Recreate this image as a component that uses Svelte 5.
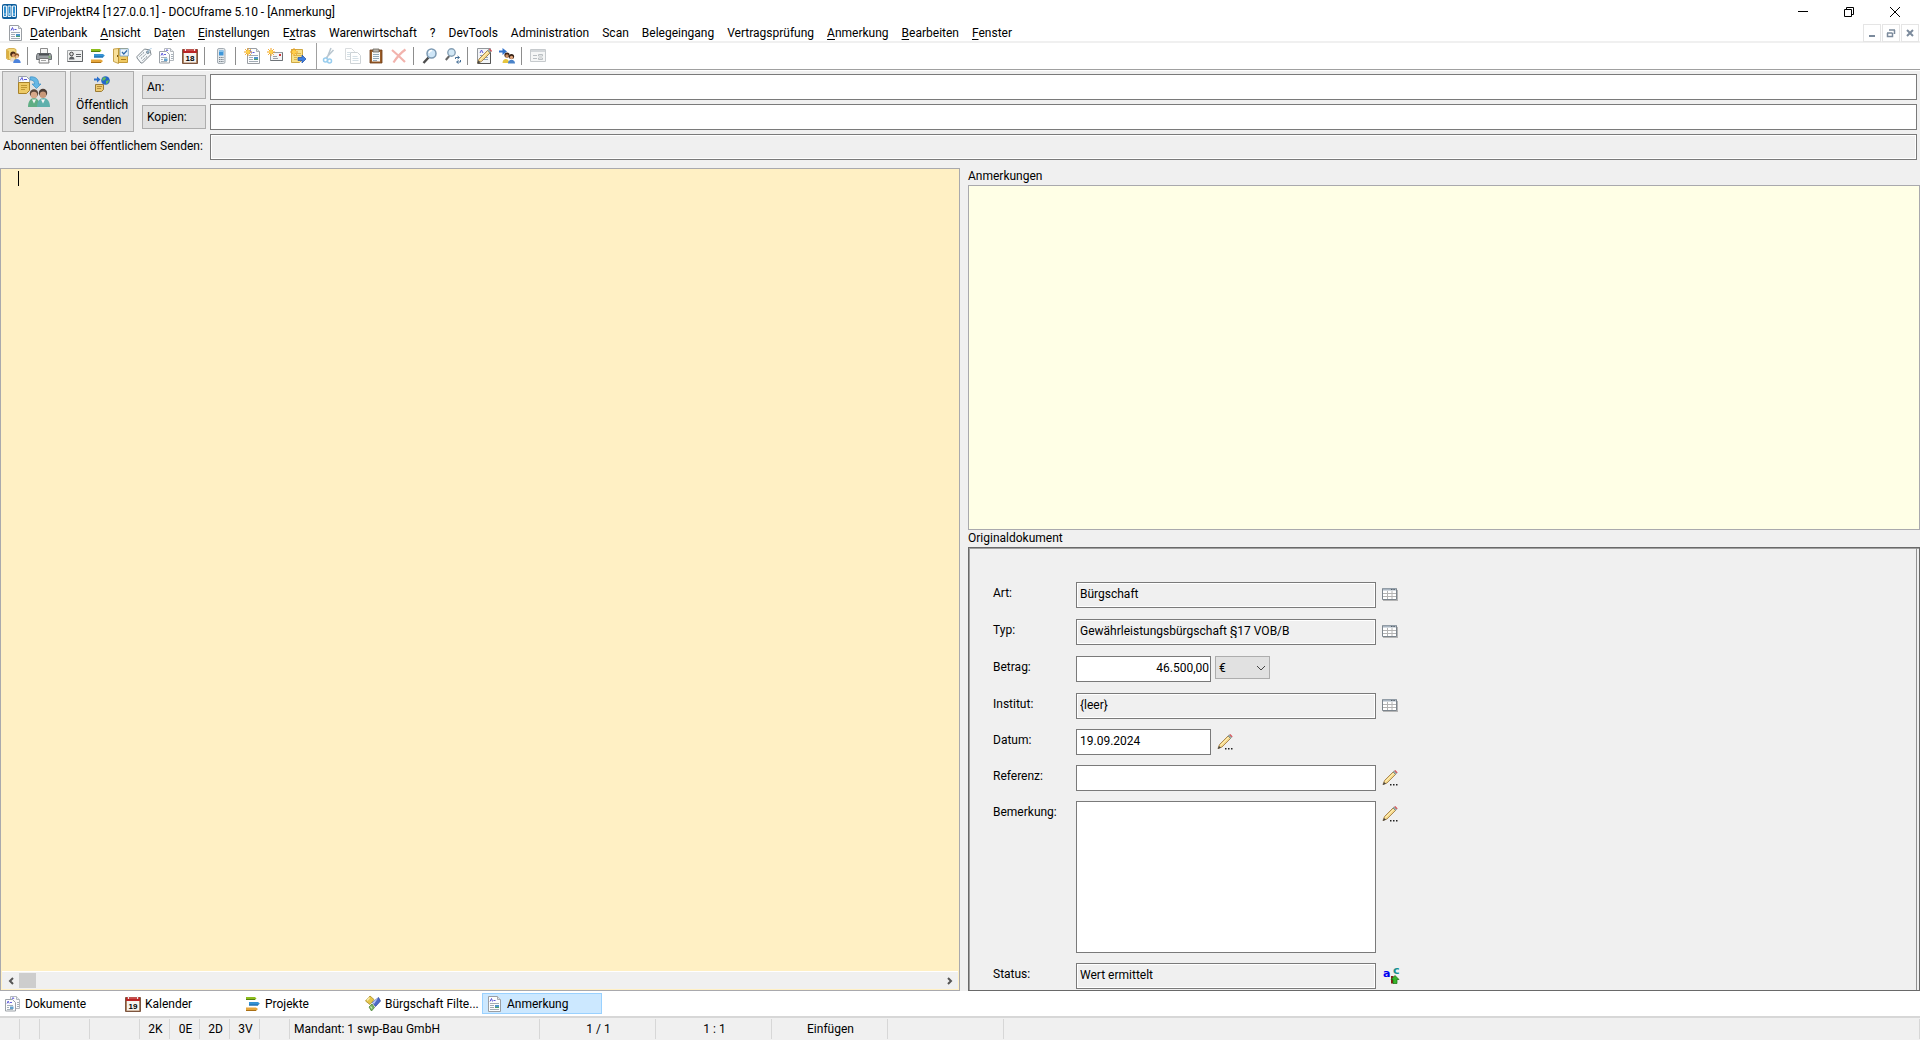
<script>
  const menu = [
    ['', 'D', 'atenbank'], ['', 'A', 'nsicht'], ['Da', 't', 'en'], ['', 'E', 'instellungen'],
    ['E', 'x', 'tras'], ['Warenwirtschaft', '', ''], ['?', '', ''], ['DevTools', '', ''],
    ['Administration', '', ''], ['Scan', '', ''], ['Belegeingang', '', ''],
    ['Vertragsprüfung', '', ''], ['', 'A', 'nmerkung'], ['', 'B', 'earbeiten'], ['', 'F', 'enster']
  ];
  const tools = [
    ['userdb', 'Anmelden'], '|', ['printer', 'Drucken'], '|', ['card', 'Adressen'], ['bars', 'Projekte'],
    ['cabinet', 'Vorgänge'], ['tag', 'Artikel'], ['docs', 'Dokumente'], ['cal18', 'Kalender'], '|',
    ['phone', 'Telefon'], '|', ['newdoc', 'Neues Dokument'], ['newmail', 'Neue Nachricht'],
    ['notearrow', 'Neue Notiz'], '||', ['cut', 'Ausschneiden'], ['copy', 'Kopieren'],
    ['paste', 'Einfügen'], ['del', 'Löschen'], '|', ['find', 'Suchen'], ['findnext', 'Weitersuchen'], '|',
    ['edit', 'Bearbeiten'], ['people', 'Senden an'], '|', ['form', 'Formular']
  ];
  const tabs = [
    ['docs', 'Dokumente'], ['cal19', 'Kalender'], ['bars', 'Projekte'],
    ['filter', 'Bürgschaft Filte...'], ['doc', 'Anmerkung']
  ];
  const status = [
    ['', 'w20'], ['', 'w20'], ['', 'w50'], ['', 'w50'], ['2K', 'w30'], ['0E', 'w30'], ['2D', 'w30'],
    ['3V', 'w30'], ['', 'w30'], ['Mandant: 1 swp-Bau GmbH', 'w250'],
    ['1 / 1', 'w116'], ['1 : 1', 'w116'], ['Einfügen', 'w116'], ['', 'w116'], ['', 'rest']
  ];
</script>

{#snippet sheet()}
  <path d="M1.500 .5h9l3 3v12h-12z" fill="#fcfdfe" stroke="#9a9ea3" />
  <path d="M10.500 .5v3h3" fill="#dfe3e6" stroke="#a8acb0" />
  <path d="M3 5.500l1.500-3 1 3M6.500 4.500h2" fill="none" stroke="#5a55d6" />
  <path d="M3 7.500h9M3 9.500h4M3 11.500h4M3 13.500h9" stroke="#a2abb5" />
  <path d="M8 9h4v3H8z" fill="#4d93c8" /><path d="M8 11h4v1H8z" fill="#4da06a" />
{/snippet}

{#snippet star()}
  <path d="M4 0v8M0 4h8M1.200 1.200l5.600 5.600M6.800 1.200L1.200 6.800" stroke="#f0a020" stroke-width="1" />
  <circle cx="4" cy="4" r="2" fill="#ffd04a" />
{/snippet}

{#snippet pencil()}
  <path d="M1 14.500l1.500-4L11 2l2.500 2.500L5 13z" fill="#f5d98c" stroke="#98713a" stroke-width=".8" />
  <path d="M3.500 11.500L12 3" stroke="#fff0b8" />
  <path d="M11 2l1.200-1.200 2.500 2.500L13.500 4.500z" fill="#9eb0ac" stroke="#71807c" stroke-width=".5" />
  <path d="M12.300 .8l1-.8 2.400 2.400-1 .9z" fill="#d85058" />
  <path d="M.7 15l1.300-3 2 1.800z" fill="#444" />
{/snippet}

{#snippet icon(name)}
  <svg class="ic" viewBox="0 0 16 16" aria-hidden="true">
    {#if name === 'userdb'}
      <path d="M1.500 1.500L4 .5h5l2 1v10H3l-1.500-1z" fill="#f3d77a" stroke="#cda23c" stroke-width=".8" />
      <path d="M2 2v8l2 1.500V3z" fill="#dcb040" />
      <circle cx="8" cy="6.200" r="2.700" fill="#4a2a16" /><circle cx="8.600" cy="7.400" r="1.800" fill="#d99a68" />
      <path d="M5 13.500c-.5-3.500 3-4.500 5-3.500l-1 3.500z" fill="#e9dccb" />
      <circle cx="11.800" cy="7.600" r="2.300" fill="#8a5326" /><circle cx="12" cy="8.600" r="1.600" fill="#efbd90" />
      <path d="M8.200 15c0-5.500 7.500-5.500 7.500 0z" fill="#4d83dc" />
    {:else if name === 'printer'}
      <path d="M4.500 .5h7v6h-7z" fill="#f6f6f6" stroke="#8b8b8b" />
      <path d="M1.500 5.500h13l1 2v4h-15v-4z" fill="#9b9fa3" stroke="#6a6e72" />
      <path d="M3 6.500h10" stroke="#4b4f53" stroke-width="2" /><path d="M3.500 10.500h9l.5 4.500H3z" fill="#fafafa" stroke="#777" />
      <path d="M5 12.500h5" stroke="#a5a5a5" /><path d="M12.500 9h2" stroke="#66c04a" />
    {:else if name === 'card'}
      <path d="M.5 2.500h15v11H.5z" fill="#eff0f0" stroke="#a3a6a8" /><path d="M.5 13.500h15v-11" fill="none" stroke="#606366" />
      <circle cx="4.500" cy="6" r="1.800" fill="#ddd" stroke="#444" /><path d="M2 11.500c0-4 5.500-4 5.500 0z" fill="#5a5d60" />
      <path d="M9 6.500h5M9 8.500h5" stroke="#5f6265" />
    {:else if name === 'bars'}
      <path d="M1 1h9l1.500 1.500L10 4H1z" fill="#8dbd1d" /><path d="M1 3.500h9" stroke="#56800e" />
      <path d="M4 6h9l1.800 1.500L13 9.500H4z" fill="#3592d4" /><path d="M4 9h9" stroke="#1765a5" />
      <path d="M1 11.500h10l2 1.500-2 2H1z" fill="#e5a63b" /><path d="M1 14.500h10" stroke="#a96f14" />
    {:else if name === 'cabinet'}
      <path d="M5.500 .5h9v14h-9z" fill="#f0c962" stroke="#c49a38" />
      <path d="M.5 1l5-.5v15L.5 13.500z" fill="#f8e09a" stroke="#b78d2b" stroke-width=".8" />
      <path d="M7 .8h8.300V8H7z" fill="#eef6fc" stroke="#6b9cc8" stroke-width=".8" />
      <path d="M9 4l1.800 2L14 2.500" fill="none" stroke="#2e68a8" stroke-width="1.200" />
      <path d="M8 11.500h5" stroke="#a4781d" /><path d="M4.500 7v2" stroke="#7d5b15" />
    {:else if name === 'tag'}
      <path d="M1 8.500L8.500 1l5.500 1 1 4.500L6.500 15H5L1 10z" fill="#f5f8fa" stroke="#7e878e" />
      <circle cx="11.800" cy="4.300" r="1.300" fill="#9cbcd2" stroke="#66737c" stroke-width=".8" />
      <path d="M3.500 8.500l5-4.500M5 10.500L10 6M6.500 12.500l5-4.500" stroke="#76838b" stroke-dasharray="1.500 .8" />
      <path d="M12 4c1-3 2-3 3.500-3.500" fill="none" stroke="#9cc0dc" />
    {:else if name === 'docs'}
      <path d="M5.500 .5h6l3 3v9h-9z" fill="#fcfdfe" stroke="#b3b8bd" />
      <path d="M11.500 .5v3h3" fill="#e8ebee" stroke="#b3b8bd" />
      <path d="M.5 3.500h7l3 3v8.500H.5z" fill="#fcfdfe" stroke="#9da2a8" />
      <path d="M2 7.500l1.200-2.500 1 2.500M5 6.500h2M7 3l1-1.500 1 1.500" fill="none" stroke="#6864dc" />
      <path d="M2 9.500h6M2 11.500h2M2 13.500h6M12 6.500h2M12 8.500h2M12 10.500h2" stroke="#a6b0b9" />
      <path d="M5 10.500h3.500v2.500H5z" fill="#62a2ce" />
    {:else if name === 'cal18' || name === 'cal19'}
      <path d="M.5 1.500h15v14H.5z" fill="#b08560" stroke="#7d5540" /><path d="M2 5h12v9.500H2z" fill="#f6f3f0" />
      <path d="M1 1.500h14V5H1z" fill="#b92525" /><path d="M2 2h12" stroke="#e07070" />
      <path d="M3.500 0v3M12.500 0v3" stroke="#eee" />
      <text x="8" y="12.500" text-anchor="middle" class="caltext">{name.slice(3)}</text>
    {:else if name === 'phone'}
      <rect x="4.500" y=".5" width="7.500" height="15" rx="1.500" fill="#e3e8ec" stroke="#a3abb2" />
      <path d="M6 2.500h4.500v5H6z" fill="#3f96d8" /><path d="M6 2.500h4.500v1.500H6z" fill="#88c4ee" />
      <path d="M6 9.500h4.500M6 11.500h4.500M6 13.500h4.500" stroke="#7b858d" stroke-dasharray="1.200 .5" />
    {:else if name === 'newdoc'}
      <g transform="translate(2 0)">{@render sheet()}</g>{@render star()}
    {:else if name === 'newmail'}
      <path d="M3.500 4.500h12v8h-12z" fill="#f4f5f6" stroke="#969ba0" /><path d="M3.500 12.500h12v-8" fill="none" stroke="#6f7479" />
      <path d="M12 6h2v2h-2z" fill="#d03535" /><path d="M6 8.500h4M6 10.500h5" stroke="#9aa0a5" />{@render star()}
    {:else if name === 'notearrow'}
      <path d="M1.500 1.500h11v10l-3 3h-8z" fill="#f8e08a" stroke="#cfa944" />
      <path d="M4 5.500h7M4 7.500h7M4 9.500h3M4 11.500h3" stroke="#dcb64c" />
      <path d="M8 9.500h4V7l4 4-4 4v-2.500H8z" fill="#3c7ee0" stroke="#1e4fa5" stroke-width=".7" />{@render star()}
    {:else if name === 'cut'}
      <path d="M9 0L5 10M11.500 2L4 10" stroke="#b9c6cf" stroke-width="1.500" />
      <circle cx="3.500" cy="12" r="2" fill="none" stroke="#98cdee" stroke-width="1.500" />
      <circle cx="7.500" cy="13" r="2" fill="none" stroke="#98cdee" stroke-width="1.500" />
    {:else if name === 'copy'}
      <path d="M.5 .5h6l3 3v8h-9z" fill="#fff" stroke="#d9dcde" /><path d="M5.500 4.500h7l3 3v8h-10z" fill="#fff" stroke="#ced3d6" />
      <path d="M2 4.500h4M2 6.500h3M2 8.500h3M7.500 8.500h5M7.500 10.500h6M7.500 12.500h6" stroke="#d5e0e6" />
    {:else if name === 'paste'}
      <path d="M2 2h12v13H2z" fill="#9b5d28" stroke="#6c3b14" stroke-width=".8" /><path d="M4 4h8v9.500H4z" fill="#f7fafc" />
      <path d="M5 6.500h6M5 8.500h6M5 10.500h6M5 12.500h4" stroke="#92a8b8" />
      <path d="M5 1h6v3H5z" fill="#b8b4ae" stroke="#69645c" stroke-width=".8" />
    {:else if name === 'del'}
      <path d="M1 2q6 5 13 12M14.500 1.500Q8 6 2.500 14.500" fill="none" stroke="#f2b3ad" stroke-width="2.200" />
    {:else if name === 'find'}
      <path d="M1.500 15l5-5.500" stroke="#4c4c4c" stroke-width="2.400" />
      <circle cx="9.500" cy="5.500" r="4.500" fill="#cfe6f7" stroke="#7c99b2" stroke-width="1.500" /><path d="M7 5q.5-2.500 3-2.500" fill="none" stroke="#fff" stroke-width="1.400" />
    {:else if name === 'findnext'}
      <path d="M.8 12l3.500-4" stroke="#666" stroke-width="2" />
      <circle cx="6.500" cy="4.500" r="3.700" fill="#d3e8f6" stroke="#86a0b5" stroke-width="1.400" />
      <path d="M10.500 11V9.500h3.500M12.500 8l2 1.500-2 1.500M15.500 12v2H12M13.500 12.500L11.500 14l2 1.500" fill="none" stroke="#426c94" />
    {:else if name === 'edit'}
      <path d="M1.500 .5h13v15h-13z" fill="#f3f5f7" stroke="#94999d" />
      <path d="M4 5l1.500-3L7 5" fill="none" stroke="#5a55d6" /><path d="M4 7.500h8M4 9.500h8M4 11.500h8" stroke="#8fa5bd" />
      <path d="M14.500 2v13.500H2" fill="none" stroke="#555" />
      <g transform="translate(.5 .5)">{@render pencil()}</g>
    {:else if name === 'people'}
      <path d="M0 2.500h3.500V0L8 3.500 3.500 7V4.500H0z" fill="#3474cc" />
      <circle cx="8" cy="7" r="2.600" fill="#3b2215" /><circle cx="8" cy="8" r="1.700" fill="#ce8f60" />
      <circle cx="12.500" cy="8.500" r="2.600" fill="#352015" /><circle cx="12.500" cy="9.500" r="1.700" fill="#dfa47a" />
      <path d="M3.500 15c0-5 6-5 6.500-1l-1 1z" fill="#e6c53e" /><path d="M9 15.500c0-5 7-5 7 0z" fill="#4a83c9" />
    {:else if name === 'form'}
      <path d="M.5 1.500h15v12H.5z" fill="#f5f6f6" stroke="#c6cacd" /><path d="M1 3h14" stroke="#d3d7da" stroke-width="2" />
      <path d="M3 7.500h4M3 10.500h4" stroke="#b9bec2" /><path d="M8.500 6.500h4v1.500h-4zM8.500 10h4v1.500h-4z" fill="#fff" stroke="#bbc0c3" />
    {:else if name === 'filter'}
      <path d="M5 0l4 3.500-4 5L.5 5z" fill="#e6c64a" stroke="#a88a25" stroke-width=".8" /><path d="M4.500 1.500L2 4.500" stroke="#f8ecae" stroke-width="1.500" />
      <path d="M13.500 1.500l2 3.500-5 5.500-3-4z" fill="#4c69c8" stroke="#31479a" stroke-width=".8" /><path d="M13.500 1.500l-6 5 1.500 1.500z" fill="#b9c8f2" />
      <path d="M4 11l3-3 2.500 3.500L6.500 15z" fill="#79b25f" stroke="#4c8638" stroke-width=".8" /><path d="M5.500 10.500l1.500 2" stroke="#d6edc9" stroke-width="1.200" />
    {:else if name === 'doc'}
      {@render sheet()}
    {:else if name === 'table'}
      <path d="M1 3h15v11H1z" fill="#b5b5b5" /><path d="M.5 1.500h14v11H.5z" fill="#fff" stroke="#7c858d" />
      <path d="M1 2.500h13" stroke="#a9b5c1" stroke-width="2" /><path d="M9 2.500h4" stroke="#55606a" stroke-dasharray="1 .6" />
      <path d="M1 6.500h13M1 9.500h13M5.500 4v8M10 4v8" stroke="#b4b4b4" />
    {:else if name === 'pencil'}
      {@render pencil()}<path d="M8 14h1.500v1.500H8zM11 14h1.500v1.500H11zM14 14h1.500v1.500H14z" fill="#222" />
    {:else if name === 'abc'}
      <text x="1" y="9" class="abc blue">a</text><text x="11" y="6" class="abc teal">c</text>
      <path d="M9 8h2.500v7.500H9z" fill="#8b1a1a" /><path d="M13 7.500l4 4h-2v4h-4v-4H9z" fill="#36b52a" stroke="#187010" stroke-width=".7" />
    {/if}
  </svg>
{/snippet}

<div class="app">
  <header class="title">
    <svg class="logo" viewBox="0 0 16 16" aria-hidden="true">
      <rect x="0" y="0" width="15" height="15" rx="2" fill="#0f5e9c" />
      <path d="M1.500 2h3v10.500h-3zM6 2h3v10.500H6zM10.500 2h3v10.500h-3z" fill="#2f8fd0" stroke="#fff" stroke-width=".9" />
      <path d="M2.500 10h1M7 10h1M11.500 10h1" stroke="#fff" />
    </svg>
    <h1>DFViProjektR4 [127.0.0.1] - DOCUframe 5.10 - [Anmerkung]</h1>
    <div class="winbtns">
      <button aria-label="Minimieren"><svg viewBox="0 0 12 12"><path d="M1 5.500h10" /></svg></button>
      <button aria-label="Verkleinern"><svg viewBox="0 0 12 12"><path d="M1.500 3.500h7v7h-7zM3.500 3.500v-2h7v7h-2" /></svg></button>
      <button aria-label="Schließen"><svg viewBox="0 0 12 12"><path d="M1 1l10 10M11 1L1 11" /></svg></button>
    </div>
  </header>

  <nav class="menu">
    {@render icon('doc')}
    <div class="items">
      {#each menu as [a, u, b]}<button>{a}{#if u}<u>{u}</u>{/if}{b}</button>{/each}
    </div>
    <div class="mdi">
      <button aria-label="Fenster minimieren"><svg viewBox="0 0 10 10"><path d="M2 8h6" /></svg></button>
      <button aria-label="Fenster verkleinern"><svg viewBox="0 0 10 10"><path d="M3 2h6M8.500 2v4M1 5h5.500M1.500 5v3.500h5V5" class="thin" /></svg></button>
      <button aria-label="Fenster schließen"><svg viewBox="0 0 10 10"><path d="M2 2l6 6M8 2L2 8" /></svg></button>
    </div>
  </nav>

  <div class="toolbar" role="toolbar">
    {#each tools as t}
      {#if t === '|'}<span class="sep"></span>
      {:else if t === '||'}<span class="sep full"></span>
      {:else}<button aria-label={t[1]}>{@render icon(t[0])}</button>{/if}
    {/each}
  </div>

  <section class="compose">
    <div class="send">
      <button class="big">
        <svg class="bigic" viewBox="0 0 32 32" aria-hidden="true">
          <path d="M.5 .5h8l3 3v8H.5z" fill="#fafbfd" stroke="#9ba2aa" /><path d="M2 4.500l2-3 1 3M6 3.500h3" fill="none" stroke="#5955d8" />
          <path d="M.5 6.500h11v8l-3 3h-8z" fill="#edca66" stroke="#a8822a" /><path d="M3 9.500h6M3 11.500h6M3 13.500h4" stroke="#c09632" />
          <path d="M12 1c5-1 9 2 8.500 7H23l-4.500 4.500L14 8h2.500c0-3-1.500-4-4.500-4z" fill="#66b7e4" stroke="#3a8dc4" stroke-width=".7" />
          <path d="M10 31c0-12 12-12 12 0z" fill="#5fae84" /><path d="M19 31c0-12 13-12 13 0z" fill="#5fb0ac" />
          <circle cx="16" cy="17.500" r="4.200" fill="#5b473a" /><circle cx="16" cy="19" r="3.200" fill="#d8a98a" />
          <circle cx="25" cy="17" r="4.200" fill="#4d3d34" /><circle cx="25" cy="18.800" r="3.200" fill="#c89878" />
          <path d="M14 23.500l2 4 2-4zM23 23.500l2 4 2-4z" fill="#f5f5f5" />
        </svg>
        <span>Senden</span>
      </button>
      <button class="big">
        <svg class="midic" viewBox="0 0 16 16" aria-hidden="true">
          <path d="M1.500 8.500h8v5l-2 2h-6z" fill="#edca72" stroke="#9d7c35" /><path d="M3 10.500h5M3 12.500h4" stroke="#b58d3b" />
          <circle cx="11.500" cy="4.500" r="4.300" fill="#2467c8" /><path d="M9 1.500q3-1 3 1l-2 2-2 0zM12 5l3-1-1 3-2 1z" fill="#63bb58" />
          <path d="M0 2.500h3V.5l3.500 3-3.500 3v-2H0z" fill="#2c70cb" />
        </svg>
        <span>Öffentlich<br />senden</span>
      </button>
      <div class="recip">
        <button>An:</button>
        <button>Kopien:</button>
      </div>
    </div>
    <div class="fields">
      <input aria-label="An" />
      <input aria-label="Kopien" />
    </div>
    <label class="abo" for="abo">Abonnenten bei öffentlichem Senden:</label>
    <input id="abo" readonly />
  </section>

  <main>
    <section class="editor">
      <textarea aria-label="Text"></textarea>
      <span class="caret"></span>
      <div class="scroll">
        <button aria-label="Nach links"><svg viewBox="0 0 8 8"><path d="M6 1L3 4l3 3" /></svg></button>
        <span class="thumb"></span>
        <button aria-label="Nach rechts"><svg viewBox="0 0 8 8"><path d="M2 1l3 3-3 3" /></svg></button>
      </div>
    </section>
    <section class="right">
      <label class="head" for="notes">Anmerkungen</label>
      <textarea id="notes" class="notes" readonly></textarea>
      <h2 class="head">Originaldokument</h2>
      <div class="original">
        <div class="form">
          <label for="art">Art:</label>
          <div class="cell"><input id="art" readonly value="Bürgschaft" /><button aria-label="Art wählen">{@render icon('table')}</button></div>
          <label for="typ">Typ:</label>
          <div class="cell"><input id="typ" readonly value="Gewährleistungsbürgschaft §17 VOB/B" /><button aria-label="Typ wählen">{@render icon('table')}</button></div>
          <label for="betrag">Betrag:</label>
          <div class="cell">
            <input id="betrag" class="short num" value="46.500,00" />
            <div class="select">
              <select aria-label="Währung"><option>€</option></select>
              <svg viewBox="0 0 10 6" aria-hidden="true"><path d="M1 1l4 4 4-4" /></svg>
            </div>
          </div>
          <label for="institut">Institut:</label>
          <div class="cell"><input id="institut" readonly value={'{leer}'} /><button aria-label="Institut wählen">{@render icon('table')}</button></div>
          <label for="datum">Datum:</label>
          <div class="cell"><input id="datum" class="short" value="19.09.2024" /><button aria-label="Datum bearbeiten">{@render icon('pencil')}</button></div>
          <label for="referenz">Referenz:</label>
          <div class="cell"><input id="referenz" /><button aria-label="Referenz bearbeiten">{@render icon('pencil')}</button></div>
          <label for="bemerkung">Bemerkung:</label>
          <div class="cell"><textarea id="bemerkung"></textarea><button aria-label="Bemerkung bearbeiten">{@render icon('pencil')}</button></div>
          <label for="status">Status:</label>
          <div class="cell"><input id="status" readonly value="Wert ermittelt" /><button aria-label="Status ändern">{@render icon('abc')}</button></div>
        </div>
      </div>
    </section>
  </main>

  <nav class="tabs">
    {#each tabs as [ic, label], i}
      <button class:active={i === 4}>{@render icon(ic)}<span>{label}</span></button>
    {/each}
  </nav>

  <footer class="status">
    {#each status as [text, w]}<span class={w}>{text}</span>{/each}
  </footer>
</div>

<style>
  :global(body) { background: #f0f0f0; }
  .app {
    display: flex; flex-direction: column; height: 100vh; overflow: hidden;
    background: #f0f0f0; color: #000; font: 12px/16px Roboto, "Open Sans", sans-serif;
  }
  .app * { box-sizing: border-box; }
  button, input, textarea, select { font: inherit; color: inherit; border-radius: 0; margin: 0; }
  button { padding: 0; border: 0; background: none; }
  svg { display: block; flex: none; }
  .ic { width: 16px; height: 16px; overflow: visible; }
  .caltext { font: bold 8px "Liberation Sans", sans-serif; }
  .abc { font: bold 11px "DejaVu Sans", sans-serif; }
  .blue { fill: #0000f0; }
  .teal { fill: #159090; }

  .title { display: flex; align-items: center; height: 24px; flex: none; background: #fff; padding: 0 2px; }
  .logo { width: 16px; height: 16px; margin-right: 5px; }
  h1, h2 { margin: 0; font-size: 12px; font-weight: 400; }
  h1 { flex: 1; white-space: nowrap; }
  .winbtns { display: flex; }
  .winbtns button { width: 46px; height: 22px; display: grid; place-items: center; }
  .winbtns svg { width: 12px; height: 12px; fill: none; stroke: #000; }

  .menu { display: flex; align-items: center; height: 19px; flex: none; background: #fff; border-bottom: 2px solid #f0f0f0; padding: 0 1px 0 8px; }
  .items { display: flex; flex: 1; gap: 13px; padding: 2px 0 0 6px; }
  .items button { white-space: nowrap; line-height: 17px; }
  u { text-underline-offset: 2px; }
  .mdi { display: flex; gap: 1px; }
  .mdi button { width: 18px; height: 18px; border: 1px solid #e5e5e5; display: grid; place-items: center; background: #fff; }
  .mdi svg { width: 10px; height: 10px; fill: none; stroke: #7b8a9c; stroke-width: 2; }
  .mdi .thin { stroke-width: 1.500; }

  .toolbar { display: flex; align-items: center; height: 27px; flex: none; background: #fff; padding-left: 2px; border-bottom: 1px solid #a0a0a0; }
  .toolbar button { width: 23px; height: 24px; padding-left: 3px; display: grid; align-items: center; }
  .sep { width: 1px; height: 18px; background: #8d8d8d; margin: 0 5px 0 2px; }
  .sep.full { height: 26px; background: #a0a0a0; margin: 0 2px 0 6px; }

  .compose {
    display: grid; grid-template-columns: 205px 1fr; column-gap: 4px; row-gap: 2px;
    padding: 0 3px 8px 1px; flex: none; border-top: 1px solid #fff;
  }
  .send { display: flex; gap: 4px; padding-left: 1px; }
  .big, .recip button { background: #e1e1e1; border: 1px solid #adadad; }
  .big { width: 64px; height: 61px; display: flex; flex-direction: column; align-items: center; justify-content: space-between; line-height: 15px; padding: 4px 0 3px; white-space: nowrap; }
  .bigic { width: 32px; height: 32px; }
  .midic { width: 16px; height: 16px; }
  .recip { display: flex; flex-direction: column; gap: 6px; padding: 4px 0 0 4px; flex: 1; }
  .recip button { height: 24px; text-align: left; padding-left: 4px; }
  .fields { display: flex; flex-direction: column; gap: 4px; padding-top: 3px; }
  input, .cell textarea { border: 1px solid #7a7a7a; background: #fff; height: 26px; padding: 0 3px 2px; width: 100%; outline: 0; }
  input[readonly] { background: #f0f0f0; box-shadow: inset 0 0 0 1px #fff; }
  .abo { padding: 4px 0 0 2px; white-space: nowrap; }

  main { display: grid; grid-template-columns: minmax(0, 960fr) minmax(0, 952fr); gap: 8px; flex: 1; min-height: 0; }
  .editor { position: relative; display: flex; flex-direction: column; background: #fff0c4; border: 1px solid #a9a9ad; }
  .editor textarea { flex: 1; border: 0; background: transparent; resize: none; outline: 0; padding: 4px 17px; }
  .caret { position: absolute; left: 17px; top: 2px; width: 1px; height: 15px; background: #000; }
  .scroll { display: flex; align-items: center; background: #f0f0f0; height: 18px; border-top: 1px solid #fff; margin: 0 1px 1px; }
  .scroll button { width: 17px; height: 17px; display: grid; place-items: center; }
  .scroll button:last-child { margin-left: auto; }
  .scroll svg { width: 8px; height: 8px; fill: none; stroke: #555; stroke-width: 2; }
  .thumb { width: 17px; height: 15px; background: #cdcdcd; }

  .right { display: grid; grid-template-rows: 17px minmax(0, 345fr) 17px minmax(0, 444fr); min-height: 0; }
  .head { line-height: 16px; }
  .notes { width: 100%; height: 100%; background: #ffffe6; border: 1px solid #a9a9ad; resize: none; outline: 0; }
  .original {
    min-height: 0; overflow: hidden; border: 1px solid #696969;
    padding: 0 2px 0 0; box-shadow: inset 0 1px 0 #a0a0a0, inset 1px 0 0 #a0a0a0;
  }
  .form {
    height: 100%; border-right: 1px solid #909090; padding: 34px 0 0 24px;
    display: grid; grid-template-columns: 83px 1fr; align-content: start; row-gap: 10px;
    grid-template-rows: repeat(3, 27px) repeat(3, 26px) 152px 26px;
  }
  .form label { line-height: 23px; }
  .cell { display: flex; align-items: flex-start; }
  .cell input, .cell textarea { width: 300px; flex: none; }
  .cell .short { width: 135px; }
  .cell .num { text-align: right; padding-right: 1px; }
  .cell textarea { height: 152px; resize: none; }
  .cell button { padding: 5px 6px; }
  .select { position: relative; margin-left: 4px; }
  select { appearance: none; width: 55px; height: 23px; border: 1px solid #adadad; background: #e1e1e1; padding: 0 3px; display: block; }
  .select svg { position: absolute; right: 4px; top: 9px; width: 10px; height: 6px; fill: none; stroke: #444; }

  .tabs { display: flex; height: 25px; flex: none; background: #fff; }
  .tabs button { width: 120px; display: flex; align-items: center; gap: 4px; padding-left: 5px; white-space: nowrap; }
  .tabs .active { height: 21px; background: #cce8ff; border: 1px solid #99d1ff; margin: 2px 0 0 2px; padding-left: 4px; }

  .status { display: flex; height: 24px; flex: none; border-top: 2px solid #d7d7d7; padding: 1px 0; }
  .status span { border-right: 1px solid #d7d7d7; text-align: center; line-height: 21px; white-space: nowrap; flex: none; padding-left: 2px; }
  .status .w20 { width: 20px; }
  .status .w30 { width: 30px; }
  .status .w50 { width: 50px; }
  .status .w116 { width: 116px; }
  .status .w250 { width: 250px; text-align: left; padding-left: 4px; }
  .status .rest { flex: 1; }
</style>
